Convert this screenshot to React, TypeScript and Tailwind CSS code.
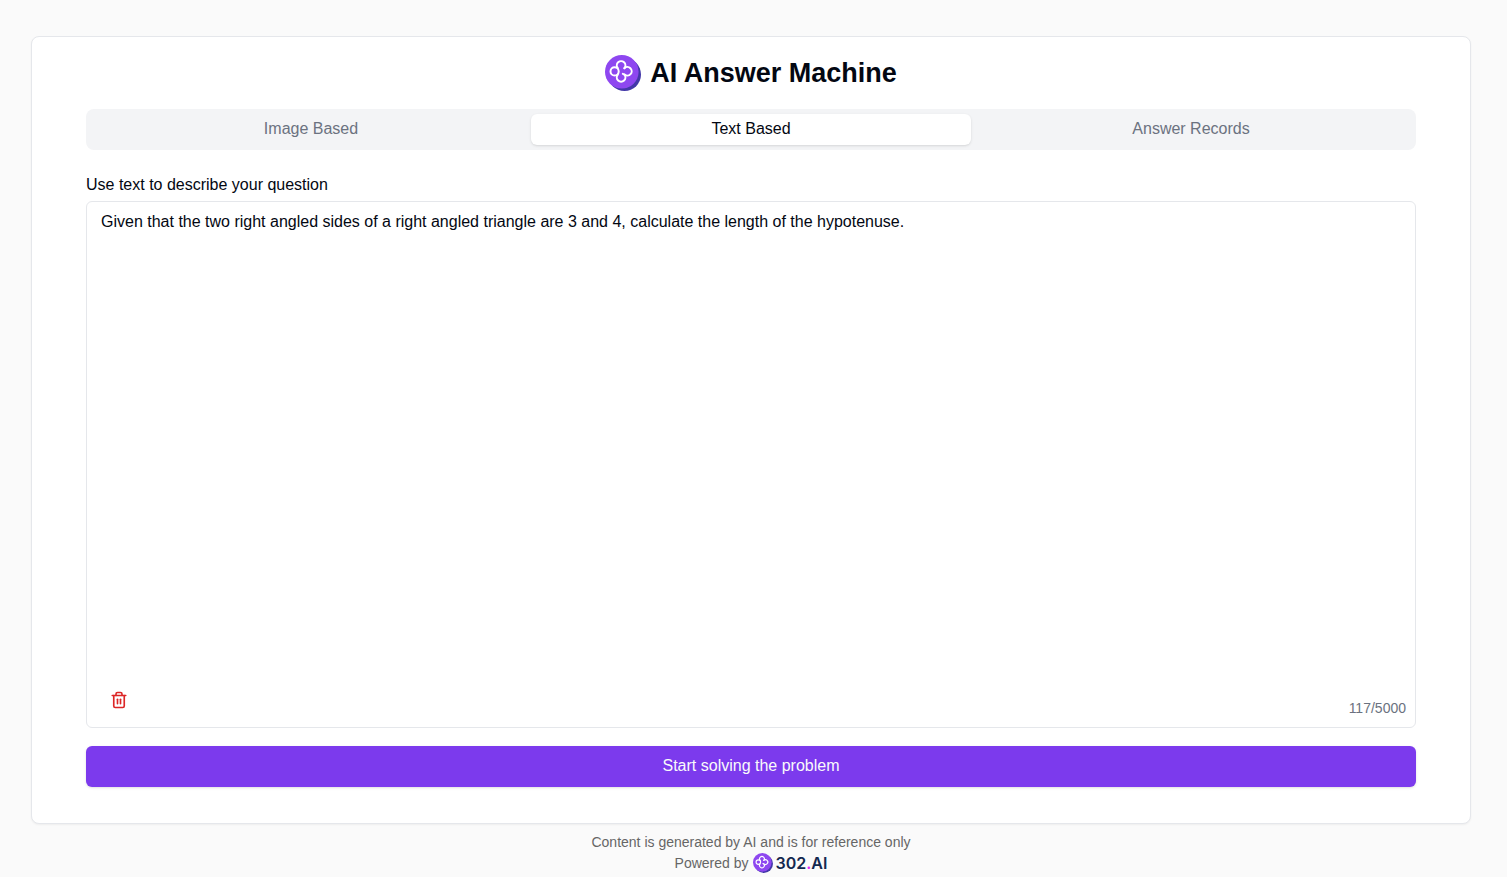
import { useState } from "react";
import { Trash2 } from "lucide-react";

function LogoMark({ className }: { className: string }) {
  return (
    <svg viewBox="0 0 36 36" className={className} aria-hidden="true">
      <circle cx="19.5" cy="19.5" r="16.5" fill="#4338a8" />
      <circle cx="16.8" cy="16.8" r="16.8" fill="#8e47f0" />
      <g fill="none" stroke="#fff" strokeWidth="2" strokeLinecap="round" strokeLinejoin="round">
        <circle cx="9.6" cy="16.4" r="4.1" />
        <path d="M12.8 13.2A4.3 4.3 0 1 1 19.4 13.2" />
        <path d="M19.4 13.2A4.3 4.3 0 1 1 19.6 19.6L17.8 18.9" />
        <path d="M12.8 19.6A4.3 4.3 0 1 0 19.4 19.6" />
      </g>
    </svg>
  );
}

const tabs = ["Image Based", "Text Based", "Answer Records"];

export default function App() {
  const [active, setActive] = useState("Text Based");
  const [text, setText] = useState(
    "Given that the two right angled sides of a right angled triangle are 3 and 4, calculate the length of the hypotenuse.",
  );

  return (
    <div className="flex min-h-screen flex-col bg-[#fafafa] pt-9 pr-9 pl-[31px] font-['Liberation_Sans',Arial,sans-serif] text-base text-[#030712]">
      <main className="flex flex-1 flex-col rounded-lg border border-gray-200 bg-white px-[54px] pt-4 pb-9 shadow-xs">
        <header className="flex h-10 items-center justify-center gap-[9px]">
          <LogoMark className="size-9" />
          <h1 className="text-[27px] leading-10 font-bold">AI Answer Machine</h1>
        </header>

        <div role="tablist" className="mt-4 grid h-[41px] grid-cols-3 rounded-lg bg-[#f3f4f6] p-[5px]">
          {tabs.map((tab) => (
            <button
              key={tab}
              type="button"
              role="tab"
              aria-selected={active === tab}
              onClick={() => setActive(tab)}
              className={
                active === tab
                  ? "rounded-md bg-white pb-px text-[#030712] shadow-sm"
                  : "rounded-md pb-px text-[#6b7280]"
              }
            >
              {tab}
            </button>
          ))}
        </div>

        <label htmlFor="question" className="mt-[23px] mb-1 leading-6">
          Use text to describe your question
        </label>
        <div className="relative flex flex-1 flex-col rounded-md border border-gray-200">
          <textarea
            id="question"
            maxLength={5000}
            value={text}
            onChange={(e) => setText(e.target.value)}
            className="mb-12 w-full flex-1 resize-none px-[14px] py-2 leading-6 outline-none"
          />
          <button
            type="button"
            aria-label="Clear text"
            onClick={() => setText("")}
            className="absolute bottom-[18px] left-[23px] text-[#dc2626]"
          >
            <Trash2 size={18} strokeWidth={2.2} />
          </button>
          <span className="absolute right-[9px] bottom-[9px] text-sm leading-5 text-[#6b7280]">
            {text.length}/5000
          </span>
        </div>

        <button
          type="button"
          className="mt-[18px] h-[41px] rounded-md bg-[#7c3aed] pb-px text-gray-50 shadow-sm"
        >
          Start solving the problem
        </button>
      </main>

      <footer className="flex h-[53px] flex-col items-center pt-2 text-sm leading-5 text-[#666]">
        <p>Content is generated by AI and is for reference only</p>
        <p className="flex items-center gap-1">
          Powered by
          <a href="#home" className="flex items-center gap-[3px] pt-px font-['Inter',sans-serif] text-base leading-5 font-semibold text-[#14284f]">
            <LogoMark className="size-5" />
            <span>
              302<span className="text-fuchsia-500">.</span>AI
            </span>
          </a>
        </p>
      </footer>
    </div>
  );
}
